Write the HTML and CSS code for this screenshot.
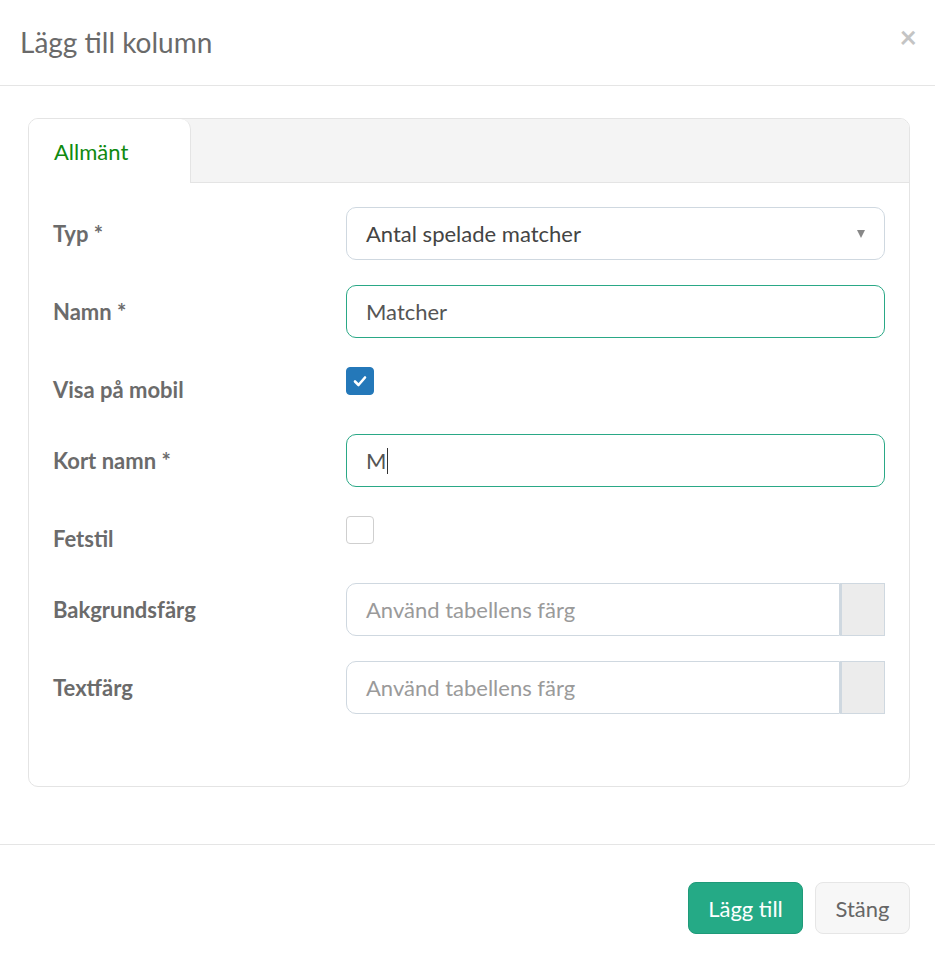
FILE: index.html
```html
<!DOCTYPE html>
<html lang="sv">
<head>
<meta charset="utf-8">
<title>Lägg till kolumn</title>
<link rel="stylesheet" href="styles.css">
</head>
<body>
<div class="modal">
  <div class="modal-header">
    <h1 class="modal-title">Lägg till kolumn</h1>
    <span class="close">×</span>
  </div>
  <div class="modal-body">
    <div class="panel">
      <div class="tabs">
        <div class="tab active">Allmänt</div>
      </div>
      <div class="form">
        <div class="label">Typ *</div>
        <div class="control">
          <div class="input select">Antal spelade matcher<span class="caret"></span></div>
        </div>

        <div class="label">Namn *</div>
        <div class="control">
          <div class="input focus">Matcher</div>
        </div>

        <div class="label">Visa på mobil</div>
        <div class="control check-row">
          <span class="checkbox checked">
            <svg viewBox="0 0 28 28" width="28" height="28"><path d="M9 14.5 L12.5 18 L19 10.5" fill="none" stroke="#fff" stroke-width="2.6" stroke-linecap="round" stroke-linejoin="round"/></svg>
          </span>
        </div>

        <div class="label">Kort namn *</div>
        <div class="control">
          <div class="input focus">M<span class="cursor"></span></div>
        </div>

        <div class="label">Fetstil</div>
        <div class="control check-row">
          <span class="checkbox"></span>
        </div>

        <div class="label">Bakgrundsfärg</div>
        <div class="control group">
          <div class="input grouped placeholder">Använd tabellens färg</div>
          <div class="addon"></div>
        </div>

        <div class="label">Textfärg</div>
        <div class="control group">
          <div class="input grouped placeholder">Använd tabellens färg</div>
          <div class="addon"></div>
        </div>
      </div>
    </div>
  </div>
  <div class="modal-footer">
    <button class="btn btn-primary">Lägg till</button>
    <button class="btn btn-default">Stäng</button>
  </div>
</div>
</body>
</html>
```

FILE: styles.css
```css
* { box-sizing: border-box; }
html, body { margin: 0; padding: 0; background: #fff; }
body { font-family: Lato, "Open Sans", "Liberation Sans", sans-serif; color: #555; }

.modal { width: 935px; }

.modal-header {
  height: 86px;
  border-bottom: 1px solid #e5e5e5;
  display: flex;
  align-items: center;
  justify-content: space-between;
  padding: 0 18px 0 20px;
}
.modal-title {
  margin: 0;
  font-size: 28px;
  font-weight: 400;
  color: #6a6a6a;
  line-height: 1;
  margin-top: -2px;
}
.close {
  font-size: 30px;
  font-weight: 700;
  color: #c4c4c4;
  line-height: 1;
  margin-top: -14px;
}

.modal-body { padding: 32px 25px 57px 28px; }

.panel {
  border: 1px solid #e4e4e4;
  border-radius: 10px;
  overflow: hidden;
}
.tabs {
  height: 64px;
  background: #f4f4f4;
  border-bottom: 1px solid #e4e4e4;
  display: flex;
}
.tab {
  width: 162px;
  height: 64px;
  background: #fff;
  border-right: 1px solid #e4e4e4;
  border-top-right-radius: 10px;
  padding-left: 25px;
  font-size: 22px;
  line-height: 66px;
  color: #0f8a0f;
}

.form {
  display: grid;
  grid-template-columns: 293px 1fr;
  row-gap: 25px;
  padding: 24px 24px 72px 24px;
}
.label {
  font-size: 22px;
  font-weight: 700;
  color: #6b6b6b;
  padding-top: 13px;
  line-height: 28px;
}
.control { min-height: 46px; }
.check-row { padding-top: 4px; }

.input {
  height: 53px;
  border: 1px solid #cfd8e0;
  border-radius: 10px;
  padding: 0 19px;
  font-size: 22px;
  line-height: 51px;
  color: #555;
  background: #fff;
  position: relative;
}
.select { color: #444; }
.focus { border-color: #2aa886; }
.placeholder { color: #9a9a9a; }
.caret {
  position: absolute;
  right: 19px;
  top: 22px;
  width: 0;
  height: 0;
  border-left: 4.5px solid transparent;
  border-right: 4.5px solid transparent;
  border-top: 8px solid #888;
}
.cursor {
  display: inline-block;
  width: 1px;
  height: 26px;
  background: #333;
  vertical-align: -5px;
  margin-left: 1px;
}

.group { display: flex; }
.grouped {
  flex: 1;
  border-top-right-radius: 0;
  border-bottom-right-radius: 0;
}
.addon {
  width: 45px;
  height: 53px;
  background: #ececec;
  border: 1px solid #cfd8e0;
  border-left-width: 2px;
}

.checkbox {
  display: block;
  width: 28px;
  height: 28px;
  border: 1px solid #cfcfcf;
  border-radius: 4px;
  background: #fff;
}
.checkbox.checked {
  background: #2478b9;
  border-color: #2478b9;
}
.checkbox svg { display: block; margin: -1px; }

.modal-footer {
  border-top: 1px solid #e5e5e5;
  padding: 37px 25px 28px 0;
  display: flex;
  justify-content: flex-end;
  gap: 12px;
}
.btn {
  font-family: Lato, "Open Sans", "Liberation Sans", sans-serif;
  font-size: 22px;
  height: 52px;
  border-radius: 8px;
  padding: 0;
  cursor: pointer;
}
.btn-primary {
  background: #25aa86;
  border: 1px solid #1f9a79;
  color: #fff;
  width: 115px;
}
.btn-default {
  background: #f7f7f7;
  border: 1px solid #e6e6e6;
  color: #666;
  width: 95px;
}
```
